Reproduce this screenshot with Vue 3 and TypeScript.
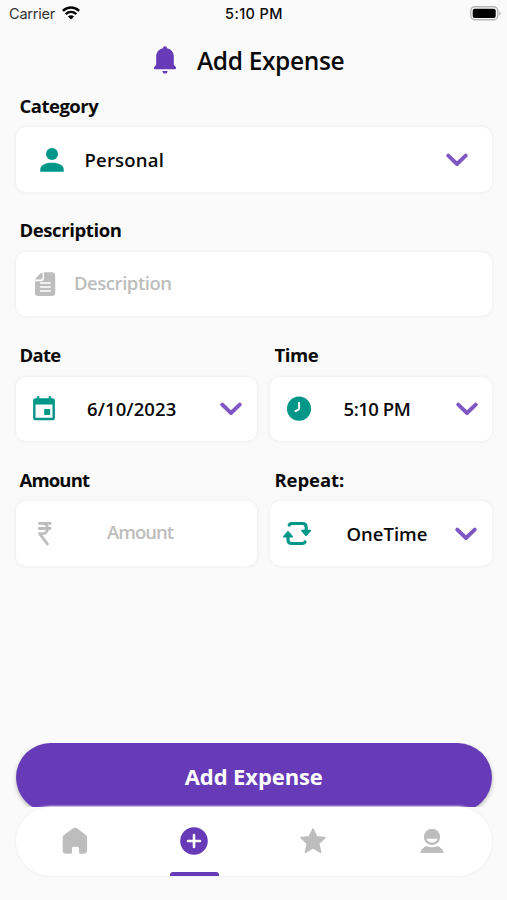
<script setup lang="ts">
import { ref } from 'vue'

type Field = {
  id: string
  label: string
  value: string
  icon: string
  placeholder?: boolean
}

const fields = ref<Field[]>([
  { id: 'category', label: 'Category', value: 'Personal', icon: 'person' },
  { id: 'description', label: 'Description', value: 'Description', icon: 'note', placeholder: true },
  { id: 'date', label: 'Date', value: '6/10/2023', icon: 'calendar' },
  { id: 'time', label: 'Time', value: '5:10 PM', icon: 'clock' },
  { id: 'amount', label: 'Amount', value: 'Amount', icon: 'rupee', placeholder: true },
  { id: 'repeat', label: 'Repeat:', value: 'OneTime', icon: 'repeat' },
])

const tabs = ['home', 'add', 'star', 'profile']
const activeTab = ref('add')
</script>

<template>
  <main class="screen">
    <div class="status">
      <div class="carrier">
        <span class="carrier-name">Carrier</span>
        <svg class="wifi" viewBox="0 0 18 14" width="18" height="14">
          <path d="M0.9 4.9C5.6.5 12.4.5 17.1 4.9" fill="none" stroke="#080808" stroke-width="2.5" />
          <path d="M3.7 8.1C6.8 5.3 11.2 5.3 14.3 8.1" fill="none" stroke="#080808" stroke-width="2.3" />
          <path d="M9 13.6 5.9 10.5Q9 8.1 12.1 10.5Z" fill="#080808" />
        </svg>
      </div>
      <span class="clock">5:10 PM</span>
      <svg class="battery" viewBox="0 0 31 15" width="31" height="15">
        <rect x=".8" y=".8" width="27" height="13" rx="4" fill="#fafafa" stroke="#b5b5b5" stroke-width="1.4" />
        <rect x="2.7" y="2.7" width="23" height="9.2" rx="2" fill="#000" />
        <path d="M29.3 5.2q1.5.7 1.5 2.1t-1.5 2.1z" fill="#b5b5b5" />
      </svg>
    </div>

    <header class="title">
      <svg viewBox="0 0 24 30" width="24" height="30">
        <path d="M12 1.2c1.2 0 2 .8 2 2 4.3.9 6.8 4.2 6.8 8.3v8.3l1.9 2.2c.9 1.2.3 2.2-.8 2.2H2.1c-1.1 0-1.7-1-.8-2.2l1.9-2.2v-8.3c0-4.1 2.5-7.4 6.8-8.3 0-1.2.8-2 2-2z" fill="#673ab7" />
        <path d="M9.3 26h5.4c-.3 1.7-1.3 2.6-2.7 2.6S9.6 27.7 9.3 26z" fill="#673ab7" />
      </svg>
      <h1>Add Expense</h1>
    </header>

    <section class="form">
      <div v-for="f in fields" :key="f.id" class="field" :class="f.id">
        <label>{{ f.label }}</label>
        <div class="box">
          <span class="icon">
            <svg v-if="f.icon === 'person'" viewBox="0 0 28 28" width="28" height="28">
              <circle cx="14" cy="8" r="6" fill="#009688" />
              <path d="M2.3 25.7v-2.2c0-4.4 5-6.7 11.7-6.7s11.7 2.3 11.7 6.7v2.2z" fill="#009688" />
            </svg>
            <svg v-else-if="f.icon === 'note'" viewBox="0 0 28 28" width="28" height="28">
              <path d="M13 2.2H21a3.2 3.2 0 0 1 3.2 3.2v17.3A3.2 3.2 0 0 1 21 25.9H7.2A3.2 3.2 0 0 1 4 22.7V11.3h5.8a3.2 3.2 0 0 0 3.2-3.2z" fill="#bdbdbd" />
              <path d="M11.6 2.4v5.2a2 2 0 0 1-2 2H4.2q.4-1.5 1.6-2.7l3-3q1.3-1.2 2.8-1.5z" fill="#bdbdbd" />
              <path d="M9.5 12.9h9.7M9.5 16.9h9.7M9.5 20.9h9.7" stroke="#fff" stroke-width="1.5" stroke-linecap="round" />
            </svg>
            <svg v-else-if="f.icon === 'calendar'" viewBox="0 0 28 28" width="28" height="28">
              <path d="M7 1.2h2.3v2h9.4v-2H21v2h1.4a2.5 2.5 0 0 1 2.5 2.5v17a2.5 2.5 0 0 1-2.5 2.5H5.6a2.5 2.5 0 0 1-2.5-2.5v-17a2.5 2.5 0 0 1 2.5-2.5H7zM5.5 9.500v13.200h17V9.500z" fill="#009688" fill-rule="evenodd" />
              <rect x="14.2" y="14" width="6" height="6" fill="#009688" />
            </svg>
            <svg v-else-if="f.icon === 'clock'" viewBox="0 0 28 28" width="28" height="28">
              <circle cx="14" cy="13.700" r="12.1" fill="#009688" />
              <path d="M14.1 7.700v6q-.2 1.400-3.700 2.300" fill="none" stroke="#fff" stroke-width="2" stroke-linecap="round" />
            </svg>
            <svg v-else-if="f.icon === 'rupee'" viewBox="0 0 28 28" width="28" height="28">
              <path d="M8.4 3.4h10.6M8.4 8.5h10.6M8.4 3.4h3.1c6.8 0 6.8 10.2 0 10.2H8.6l7.8 10.4" fill="none" stroke="#bdbdbd" stroke-width="2.9" stroke-linecap="round" stroke-linejoin="round" />
            </svg>
            <svg v-else viewBox="0 0 28 28" width="28" height="28">
              <path d="M6.2 5q.7-1.5 2.600-1.500h10.600q3.800 0 3.800 3.800v4M22 22q-.8 1.500-2.600 1.500H8.800q-3.800 0-3.800-3.800v-4" fill="none" stroke="#009688" stroke-width="3.2" stroke-linecap="round" />
              <path d="M18.600 9.700h9q1.100.2.400 1.300l-4.100 4.700q-.8.800-1.600 0l-4.100-4.700q-.7-1.100.4-1.300zM.5 17.500h9q1.100-.2.400-1.300l-4.100-4.700q-.8-.8-1.600 0L.1 16.200q-.7 1.100.4 1.300z" fill="#009688" />
            </svg>
          </span>
          <span class="value" :class="{ placeholder: f.placeholder }">{{ f.value }}</span>
          <svg v-if="!f.placeholder" class="chevron" viewBox="0 0 22 14" width="22" height="14">
            <path d="M2.3 2.6 11 11 19.7 2.6" fill="none" stroke="#7e57c2" stroke-width="3.9" stroke-linecap="round" stroke-linejoin="round" />
          </svg>
        </div>
      </div>
    </section>

    <div class="submit-area">
      <button class="submit" type="button"><span>Add Expense</span></button>
    </div>

    <nav class="tabs">
      <button
        v-for="t in tabs"
        :key="t"
        type="button"
        class="tab"
        :class="{ active: t === activeTab }"
        @click="activeTab = t"
      >
        <svg v-if="t === 'home'" viewBox="0 0 28 28" width="28" height="28">
          <path d="M12.1 1.3q1.9-1.3 3.8 0l8.7 6.5q1.5 1.2 1.5 3v12.4q0 3.5-3.5 3.5h-3.1q-1.5 0-1.5-1.5v-3.9q0-1.5-1.5-1.5h-4q-1.5 0-1.5 1.5v3.9q0 1.5-1.5 1.5H5.2q-3.5 0-3.5-3.5V10.8q0-1.8 1.5-3z" fill="currentColor" />
        </svg>
        <svg v-else-if="t === 'add'" viewBox="0 0 28 28" width="28" height="28">
          <circle cx="14" cy="14" r="13.8" fill="currentColor" />
          <path d="M14 8v12M8 14h12" stroke="#fff" stroke-width="2.6" stroke-linecap="round" />
        </svg>
        <svg v-else-if="t === 'star'" viewBox="0 0 28 28" width="28" height="28">
          <path d="M14 1.8 17.6 9.6 26.3 10.6 19.8 16.4 21.7 25.3 14 21 6.3 25.3 8.2 16.4 1.7 10.6 10.4 9.6Z" fill="currentColor" stroke="currentColor" stroke-width="1.4" stroke-linejoin="round" />
        </svg>
        <svg v-else viewBox="0 0 28 28" width="28" height="28">
          <circle cx="14" cy="9.9" r="8.1" fill="currentColor" />
          <path d="M8.4 11.8h11.2a5.8 5 0 0 1-11.2 0z" fill="#fff" />
          <path d="M2.4 26q.7-3.6 3.4-5.6 1.3-1 2.8-1.3 5.4 2.4 10.8 0 1.5.3 2.8 1.3 2.7 2 3.4 5.6z" fill="currentColor" />
        </svg>
      </button>
    </nav>
  </main>
</template>

<style>
body {
  margin: 0;
  background: #fafafa;
}
</style>

<style scoped>
.screen {
  width: 507px;
  height: 900px;
  overflow: hidden;
  box-sizing: border-box;
  display: flex;
  flex-direction: column;
  background: #fafafa;
  color: #0a0a0a;
  font-family: 'Open Sans', 'Noto Sans', sans-serif;
}
.status {
  height: 28px;
  display: grid;
  grid-template-columns: 1fr auto 1fr;
  align-items: center;
  padding: 0 6px 0 9px;
  font: 500 14.5px/28px Inter, sans-serif;
}
.carrier {
  display: flex;
  align-items: center;
  gap: 7px;
}
.carrier-name {
  font-weight: 400;
  letter-spacing: -0.2px;
  color: #333;
}
.clock {
  letter-spacing: 0.4px;
  margin-right: 2px;
}
.wifi {
  margin-top: -2px;
}
.battery {
  justify-self: end;
  margin-top: -2px;
}
.title {
  height: 65.6px;
  display: flex;
  align-items: center;
  gap: 20px;
  padding-left: 153px;
}
.title svg {
  margin-top: -1px;
}
h1 {
  margin: 0;
  font-size: 24.5px;
  font-weight: 600;
  line-height: 32px;
  letter-spacing: -0.36px;
}
.form {
  display: grid;
  grid-template-columns: 241px 222.5px;
  column-gap: 13px;
  padding: 0 15px 0 15.5px;
  height: 649.4px;
  align-content: start;
  grid-auto-rows: 124.7px;
}
.category,
.description {
  grid-column: 1 / -1;
}
label {
  display: block;
  height: 33.7px;
  padding-left: 4px;
  font-size: 18.5px;
  font-weight: 700;
  line-height: 24px;
}
.box {
  box-sizing: border-box;
  height: 64.5px;
  display: flex;
  align-items: center;
  background: #fff;
  border-radius: 10px;
  box-shadow: 0 0 3px 1px #f0f0f0;
}
.icon {
  width: 28px;
  height: 28px;
  flex: none;
}
.icon svg {
  display: block;
  overflow: visible;
}
.value {
  font-size: 18.5px;
  font-weight: 600;
  line-height: 24px;
  white-space: nowrap;
}
.placeholder {
  color: #bdbdbd;
  margin-top: -3px;
}
.chevron {
  flex: none;
  margin-left: auto;
}
.category label { letter-spacing: -0.5px; }
.category .box { padding: 0 24px 0 22.5px; }
.category .value { margin-left: 18.5px; letter-spacing: 0.2px; }
.description label { letter-spacing: -0.4px; }
.description .box { padding-left: 15.5px; }
.description .value { margin-left: 15px; letter-spacing: -0.45px; }
.date label { letter-spacing: -0.7px; }
.date .box { padding: 0 15px 0 14.5px; }
.date .value { margin-left: 29px; letter-spacing: 0.1px; }
.time label { letter-spacing: -0.45px; }
.time .box { padding: 0 14.5px 0 15.5px; }
.time .value { margin-left: 30.5px; letter-spacing: -0.45px; }
.amount label { letter-spacing: -0.85px; }
.amount .box { padding-left: 15.5px; }
.amount .value { margin-left: 48px; letter-spacing: -1px; }
.repeat label { letter-spacing: -0.1px; }
.repeat .box { padding: 0 15.5px 0 13.5px; }
.repeat .value { margin-left: 35.5px; }
.time label,
.repeat label { padding-left: 5px; }
button {
  border: 0;
  font-family: inherit;
}
/* Clips the pill flat where the tab bar begins. */
.submit-area {
  flex: none;
  height: 64px;
  overflow: hidden;
  padding: 0 15px 0 15.5px;
}
.submit {
  display: block;
  width: 100%;
  height: 69px;
  padding: 0;
  border-radius: 35px;
  background: #673ab7;
  color: #fff;
  box-shadow: 0 2px 4px #00000040;
  font-size: 22px;
  font-weight: 700;
  letter-spacing: -0.1px;
}
.submit span {
  display: block;
  margin-top: -3px;
}
.tabs {
  flex: none;
  height: 69px;
  margin: 0 15px 0 15.5px;
  display: grid;
  grid-template-columns: repeat(4, 1fr);
  background: #fff;
  border-radius: 35px;
  box-shadow: 0 0 2px 1px #f1f1f1;
}
.tab {
  display: flex;
  flex-direction: column;
  align-items: center;
  padding: 20.5px 0 0;
  background: none;
  color: #bdbdbd;
}
.tab svg {
  display: block;
  flex: none;
}
.active {
  color: #673ab7;
}
.active::after {
  content: '';
  width: 49px;
  height: 4px;
  margin-top: auto;
  border-radius: 3px 3px 0 0;
  background: #673ab7;
}
</style>
